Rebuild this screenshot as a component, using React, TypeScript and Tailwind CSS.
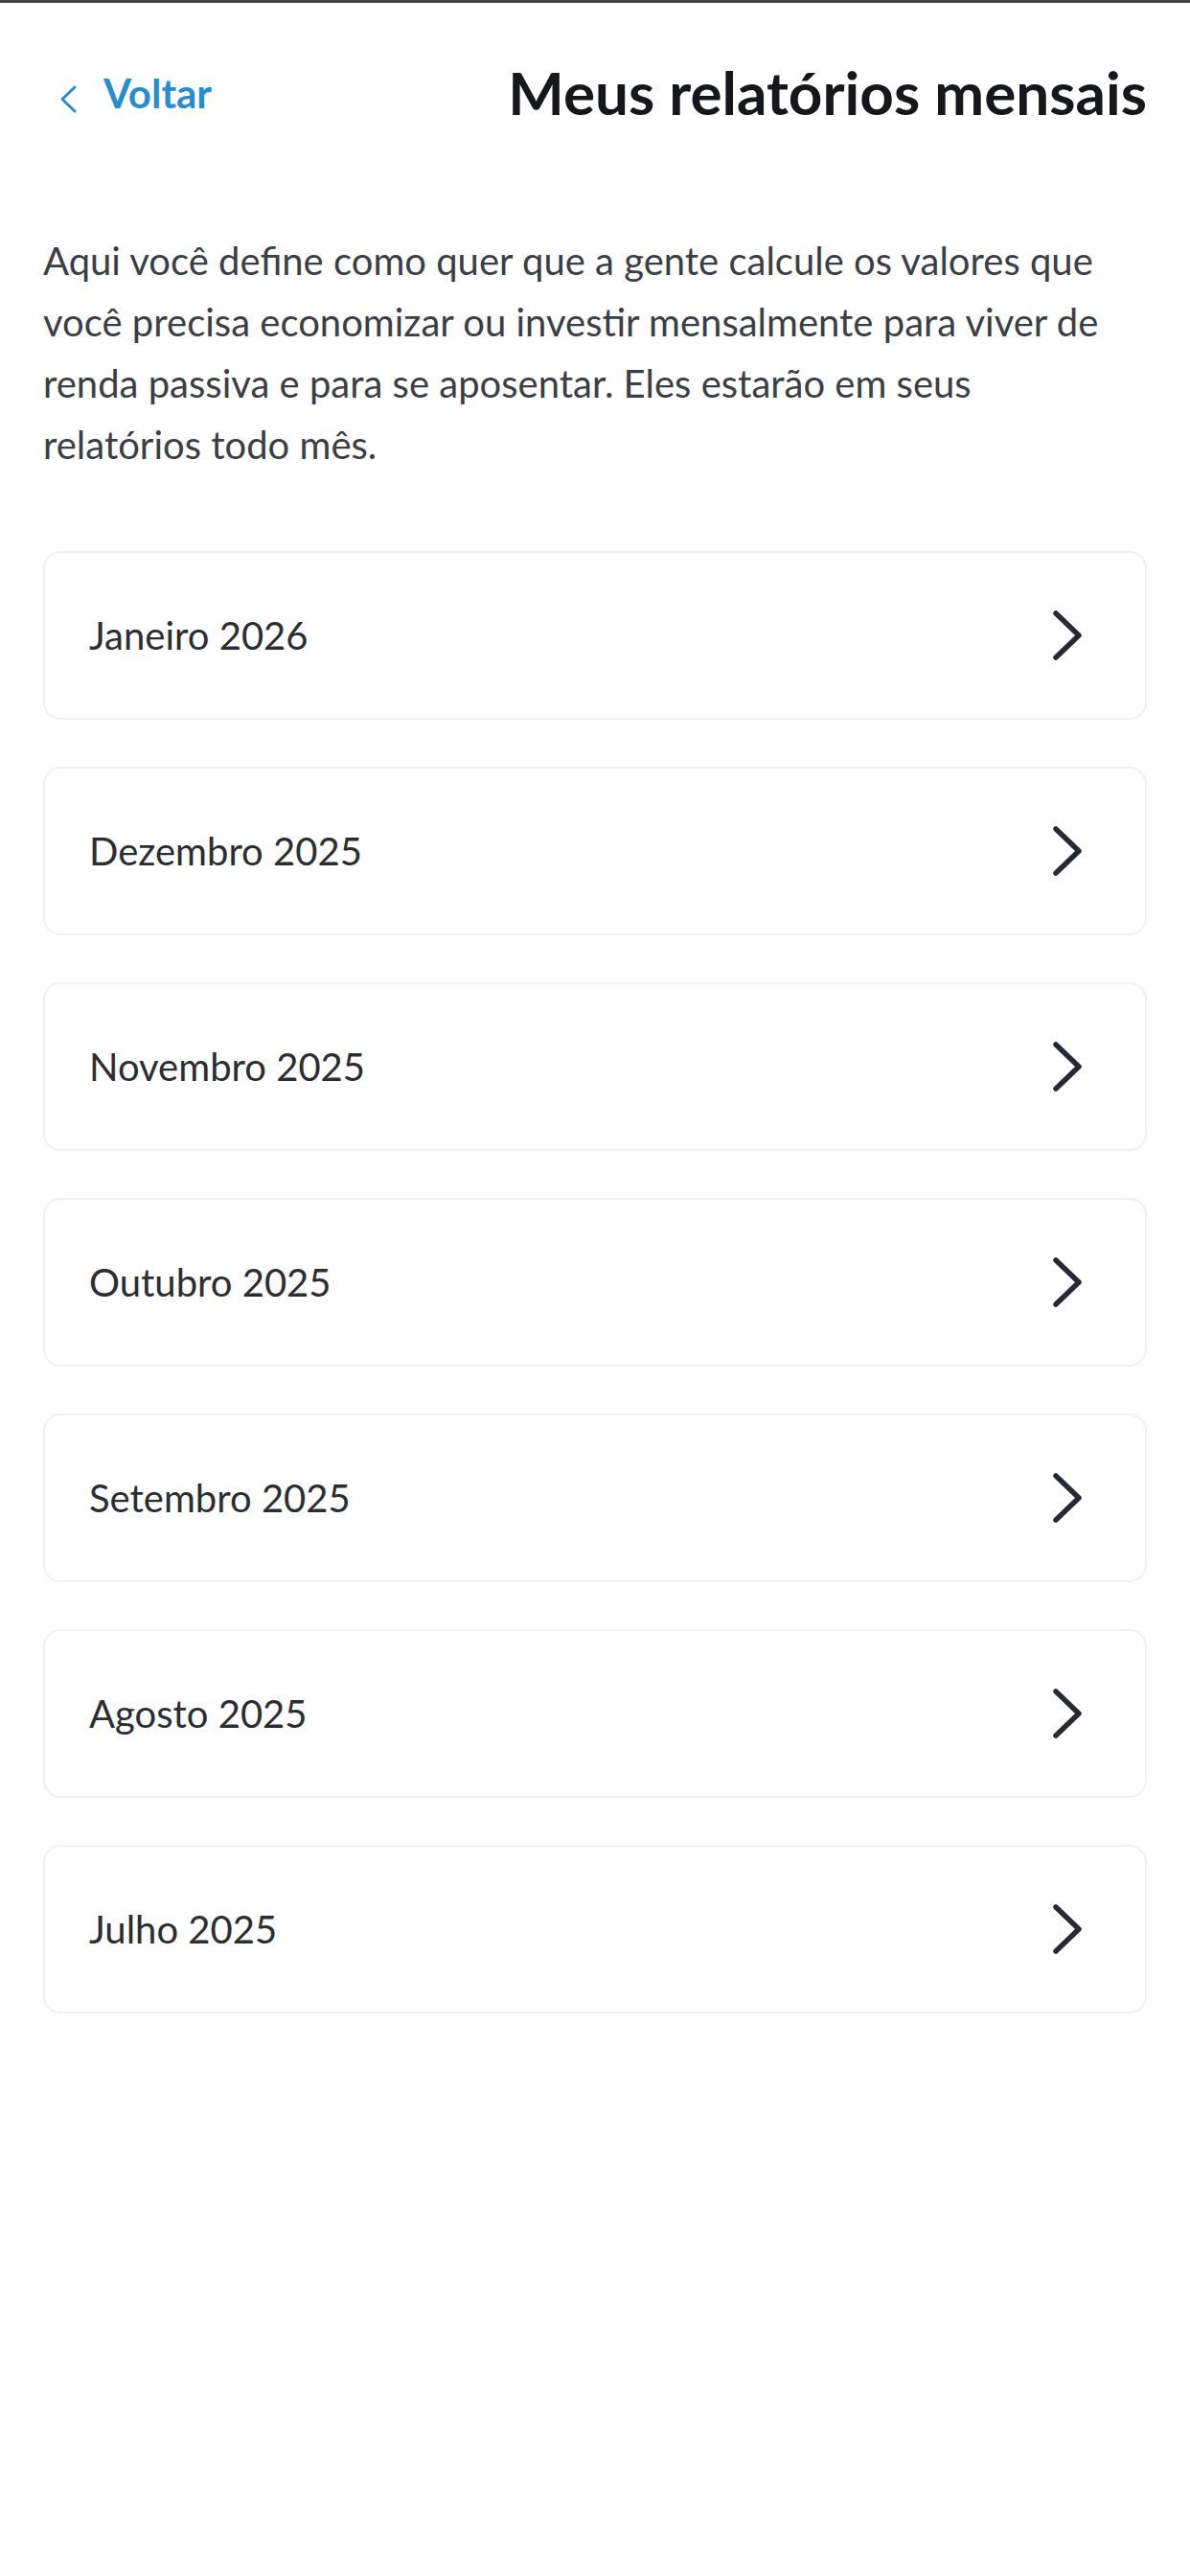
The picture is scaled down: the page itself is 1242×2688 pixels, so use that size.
import { useState } from 'react';

const months = [
  'Janeiro 2026',
  'Dezembro 2025',
  'Novembro 2025',
  'Outubro 2025',
  'Setembro 2025',
  'Agosto 2025',
  'Julho 2025',
];

function BackChevron() {
  return (
    <svg width="18" height="29" viewBox="0 0 18 29" fill="none" className="mt-[12px]">
      <path d="M16 2 L3 14.5 L16 27" stroke="#2b8ccc" strokeWidth="3" strokeLinecap="round" strokeLinejoin="round" />
    </svg>
  );
}

function RowChevron() {
  return (
    <svg width="32" height="54" viewBox="0 0 32 54" fill="none">
      <path d="M4 4 L28 27 L4 50" stroke="#262a33" strokeWidth="5.5" strokeLinecap="round" strokeLinejoin="round" />
    </svg>
  );
}

function MonthRow({ label, onSelect }: { label: string; onSelect: (m: string) => void }) {
  return (
    <button
      onClick={() => onSelect(label)}
      className="h-[176px] w-full flex items-center justify-between pl-[46px] pr-[65px] bg-white border-2 border-[#f1f1f3] rounded-[18px] text-left"
    >
      <span className="text-[40px] leading-[48px] text-[#2b2d33]">{label}</span>
      <RowChevron />
    </button>
  );
}

export default function App() {
  const [selected, setSelected] = useState<string | null>(null);

  return (
    <div className="min-h-[2688px] w-full bg-white font-['Lato',sans-serif]">
      {/* status strip */}
      <div className="h-[3px] w-full bg-[#454545]" />

      <div className="px-[45px]">
        {/* Header */}
        <div className="pt-[57px] flex items-start justify-between">
          <button className="mt-[12px] flex items-center gap-[28px] pl-[17px]">
            <BackChevron />
            <span className="text-[42px] leading-[50px] font-bold text-[#2b8ccc]">Voltar</span>
          </button>
          <h1 className="text-[62px] leading-[72px] font-bold text-[#16171a]">Meus relatórios mensais</h1>
        </div>

        {/* Intro */}
        <p className="mt-[108px] pr-[30px] text-[40px] leading-[64px] text-[#3c3e45]">
          Aqui você define como quer que a gente calcule os valores que você precisa economizar ou investir
          mensalmente para viver de renda passiva e para se aposentar. Eles estarão em seus relatórios todo mês.
        </p>

        {/* Months */}
        <div className="mt-[79px] flex flex-col gap-[49px]">
          {months.map((m) => (
            <MonthRow key={m} label={m} onSelect={setSelected} />
          ))}
        </div>
        {selected && <div className="hidden">{selected}</div>}
      </div>
    </div>
  );
}
